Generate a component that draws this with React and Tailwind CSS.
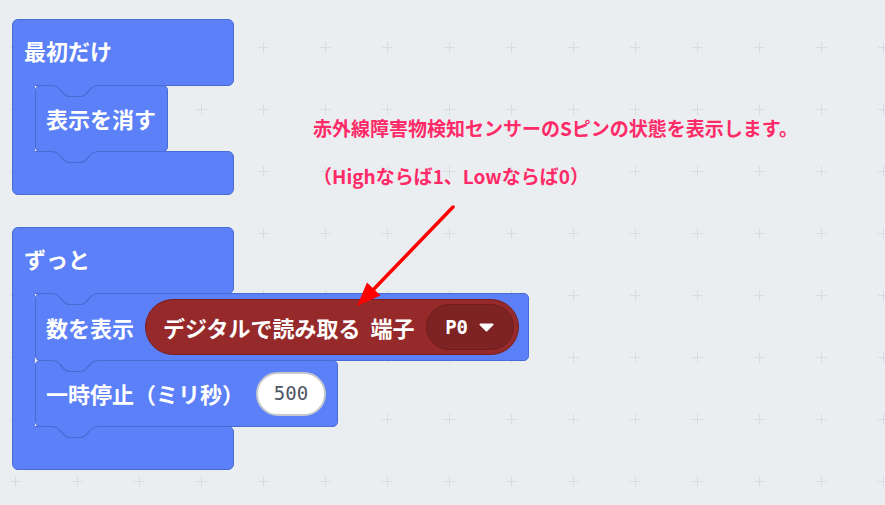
import React from 'react';

const FONT = { fontFamily: '"Noto Sans CJK JP", "Noto Sans", sans-serif' };

// notch outline used on top and bottom edges of statement blocks
function Notch({ pos }) {
  return (
    <svg
      className={`absolute left-[15px] ${pos} overflow-visible`}
      width="48"
      height="13"
      viewBox="0 0 48 13"
    >
      <rect x="0" y="0" width="48" height="1" fill="#5b80f7" />
      <path
        d="M0 0.5 C5 0.5 7 2 9 4.5 L13 9 C15 11 16.5 11.5 19 11.5 L29 11.5 C31.5 11.5 33 11 35 9 L39 4.5 C41 2 43 0.5 48 0.5"
        fill="none"
        stroke="#4a6bd3"
        strokeWidth="1.2"
      />
    </svg>
  );
}

function Statement({ children, className = '' }) {
  return (
    <div
      className={`relative flex items-center self-start rounded-[5px] border border-[#4a6bd3] bg-[#5b80f7] pl-[10px] text-[22px] font-semibold text-white ${className}`}
    >
      <Notch pos="-top-px" />
      {children}
      <Notch pos="top-full" />
    </div>
  );
}

function CBlock({ label, children }) {
  return (
    <div className="flex flex-col items-start">
      <div className="flex h-[67px] w-[222px] items-center rounded-[6px] rounded-bl-none border border-[#4a6bd3] bg-[#5b80f7] pb-[4px] pl-[11px] text-[22px] font-semibold text-white">
        {label}
      </div>
      <div className="-mt-px flex">
        <div className="relative w-[23px] border-l border-[#4a6bd3] bg-[#5b80f7]" />
        <div className="flex flex-col">{children}</div>
      </div>
      <div className="-mt-px h-[44px] w-[222px] rounded-[6px] rounded-tl-none border border-[#4a6bd3] bg-[#5b80f7]" />
    </div>
  );
}

function Grid() {
  return (
    <svg className="absolute inset-0" width="885" height="505">
      <defs>
        <pattern id="cross" x="-16" y="16" width="62" height="62" patternUnits="userSpaceOnUse">
          <rect x="26" y="31" width="11" height="1" fill="#d9dde1" />
          <rect x="31" y="26" width="1" height="11" fill="#d9dde1" />
        </pattern>
      </defs>
      <rect width="885" height="505" fill="url(#cross)" />
    </svg>
  );
}

export default function App() {
  return (
    <div className="relative h-[505px] w-[885px] overflow-hidden bg-[#ebeef0]" style={FONT}>
      <Grid />

      {/* block stacks */}
      <div className="relative flex flex-col gap-[32px] pl-[12px] pt-[19px]">
        <CBlock label="最初だけ">
          <Statement className="h-[67px] pr-[11px]">表示を消す</Statement>
        </CBlock>

        <CBlock label="ずっと">
          <Statement className="h-[68px] pr-[9px]">
            <span>数を表示</span>
            <div className="ml-[11px] flex h-[56px] items-center rounded-full border border-[#7a1f1f] bg-[#962a2a] pl-[17px] pr-[4px]">
              <span>デジタルで読み取る&nbsp; 端子</span>
              <div className="ml-[11px] flex h-[46px] w-[88px] items-center justify-center gap-[11px] rounded-full border border-[#6f1c1c] bg-[#7e2323]">
                <span className="font-['DejaVu_Sans_Mono'] text-[19px] font-bold">P0</span>
                <svg width="15" height="9" viewBox="0 0 15 9">
                  <path d="M1.5 1.5 L13.5 1.5 L7.5 7.5 Z" fill="#fff" stroke="#fff" strokeWidth="2" strokeLinejoin="round" />
                </svg>
              </div>
            </div>
          </Statement>
          <Statement className="-mt-px h-[67px] pr-[11px]">
            <span>一時停止（ミリ秒）</span>
            <div className="ml-[12px] flex h-[44px] w-[70px] items-center justify-center rounded-full border-2 border-[#c6cace] bg-white font-['DejaVu_Sans_Mono'] text-[19px] font-medium text-[#4d5565]">
              500
            </div>
          </Statement>
        </CBlock>
      </div>

      {/* annotation */}
      <div className="absolute left-[313px] top-[104px] flex flex-col text-[19px] font-bold leading-[48px] text-[#ff2a68]">
        <span>赤外線障害物検知センサーのSピンの状態を表示します。</span>
        <span>（Highならば1、Lowならば0）</span>
      </div>

      <svg className="absolute inset-0" width="885" height="505">
        <line x1="453" y1="207" x2="372" y2="291" stroke="#ff0000" strokeWidth="3.5" strokeLinecap="round" />
        <polygon points="357,306 367,282.5 380.5,295.5" fill="#ff0000" />
      </svg>
    </div>
  );
}
